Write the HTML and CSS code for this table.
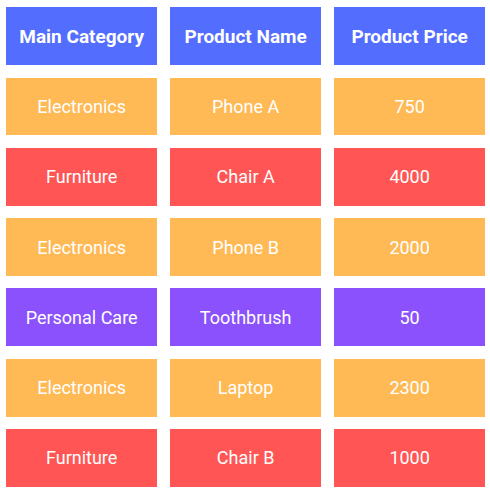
FILE: index.html
```html
<!DOCTYPE html>
<html>
<head>
<meta charset="utf-8">
<link rel="stylesheet" href="styles.css">
</head>
<body>
<div class="table">
  <div class="cell head">Main Category</div>
  <div class="cell head">Product Name</div>
  <div class="cell head">Product Price</div>

  <div class="cell orange">Electronics</div>
  <div class="cell orange">Phone A</div>
  <div class="cell orange">750</div>

  <div class="cell red">Furniture</div>
  <div class="cell red">Chair A</div>
  <div class="cell red">4000</div>

  <div class="cell orange">Electronics</div>
  <div class="cell orange">Phone B</div>
  <div class="cell orange">2000</div>

  <div class="cell purple">Personal Care</div>
  <div class="cell purple">Toothbrush</div>
  <div class="cell purple">50</div>

  <div class="cell orange">Electronics</div>
  <div class="cell orange">Laptop</div>
  <div class="cell orange">2300</div>

  <div class="cell red">Furniture</div>
  <div class="cell red">Chair B</div>
  <div class="cell red">1000</div>
</div>
</body>
</html>
```
FILE: styles.css
```css
html, body {
  margin: 0;
  padding: 0;
  background: #ffffff;
}
body {
  padding: 7.3px 0 0 6px;
  font-family: Roboto, "Noto Sans", sans-serif;
}
.table {
  display: grid;
  grid-template-columns: repeat(3, 151.3px);
  grid-auto-rows: 57.8px;
  column-gap: 12.7px;
  row-gap: 12.5px;
}
.cell {
  display: flex;
  align-items: center;
  justify-content: center;
  color: #ffffff;
  font-size: 18px;
}
.head {
  background: #536dfe;
  font-weight: 700;
  font-size: 19px;
}
.orange { background: #ffb955; }
.red { background: #ff5555; }
.purple { background: #8a51fc; }
```
